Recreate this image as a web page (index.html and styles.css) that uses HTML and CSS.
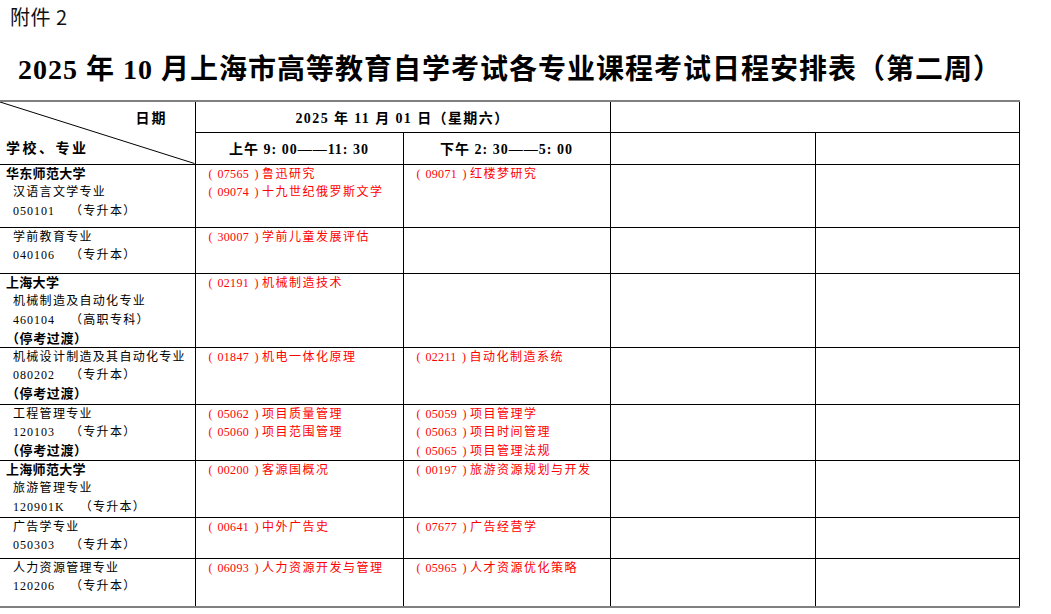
FILE: index.html
```html
<!DOCTYPE html>
<html lang="zh-CN">
<head>
<meta charset="utf-8">
<title>2025年10月上海市高等教育自学考试日程安排表（第二周）</title>
<link rel="stylesheet" href="styles.css">
</head>
<body>
<div class="attach">附件 2</div>
<h1 class="title">2025 年 10 月上海市高等教育自学考试各专业课程考试日程安排表（第二周）</h1>
<table class="sched">
  <colgroup>
    <col class="c1"><col class="c2"><col class="c3"><col class="c4"><col class="c5">
  </colgroup>
  <tr class="h-a">
    <th class="corner" rowspan="2">
      <svg class="diag" viewBox="0 0 100 100" preserveAspectRatio="none"><line x1="0" y1="0" x2="100" y2="100" stroke="#000" stroke-width="1" vector-effect="non-scaling-stroke"/></svg>
      <span class="c-date">日期</span>
      <span class="c-school">学校、专业</span>
    </th>
    <th class="hd date" colspan="2">2025 年 11 月 01 日（星期六）</th>
    <th class="hd" colspan="2"></th>
  </tr>
  <tr class="h-b">
    <th class="hd">上午 9: 00——11: 30</th>
    <th class="hd">下午 2: 30——5: 00</th>
    <th class="hd"></th>
    <th class="hd"></th>
  </tr>
  <tr class="r1">
    <td class="spec"><div class="school">华东师范大学</div><div class="ln">汉语言文学专业</div><div class="ln"><span class="code">050101</span>（专升本）</div></td>
    <td class="crs"><div><span class="cc">(<span class="num">07565</span>)</span>鲁迅研究</div><div><span class="cc">(<span class="num">09074</span>)</span>十九世纪俄罗斯文学</div></td>
    <td class="crs"><div><span class="cc">(<span class="num">09071</span>)</span>红楼梦研究</div></td>
    <td></td><td></td>
  </tr>
  <tr class="r2">
    <td class="spec"><div class="ln">学前教育专业</div><div class="ln"><span class="code">040106</span>（专升本）</div></td>
    <td class="crs"><div><span class="cc">(<span class="num">30007</span>)</span>学前儿童发展评估</div></td>
    <td></td><td></td><td></td>
  </tr>
  <tr class="r3">
    <td class="spec"><div class="school">上海大学</div><div class="ln">机械制造及自动化专业</div><div class="ln"><span class="code">460104</span>（高职专科）</div><div class="stop">（停考过渡）</div></td>
    <td class="crs"><div><span class="cc">(<span class="num">02191</span>)</span>机械制造技术</div></td>
    <td></td><td></td><td></td>
  </tr>
  <tr class="r4">
    <td class="spec"><div class="ln">机械设计制造及其自动化专业</div><div class="ln"><span class="code">080202</span>（专升本）</div><div class="stop">（停考过渡）</div></td>
    <td class="crs"><div><span class="cc">(<span class="num">01847</span>)</span>机电一体化原理</div></td>
    <td class="crs"><div><span class="cc">(<span class="num">02211</span>)</span>自动化制造系统</div></td>
    <td></td><td></td>
  </tr>
  <tr class="r5">
    <td class="spec"><div class="ln">工程管理专业</div><div class="ln"><span class="code">120103</span>（专升本）</div><div class="stop">（停考过渡）</div></td>
    <td class="crs"><div><span class="cc">(<span class="num">05062</span>)</span>项目质量管理</div><div><span class="cc">(<span class="num">05060</span>)</span>项目范围管理</div></td>
    <td class="crs"><div><span class="cc">(<span class="num">05059</span>)</span>项目管理学</div><div><span class="cc">(<span class="num">05063</span>)</span>项目时间管理</div><div><span class="cc">(<span class="num">05065</span>)</span>项目管理法规</div></td>
    <td></td><td></td>
  </tr>
  <tr class="r6">
    <td class="spec"><div class="school">上海师范大学</div><div class="ln">旅游管理专业</div><div class="ln"><span class="code">120901K</span>（专升本）</div></td>
    <td class="crs"><div><span class="cc">(<span class="num">00200</span>)</span>客源国概况</div></td>
    <td class="crs"><div><span class="cc">(<span class="num">00197</span>)</span>旅游资源规划与开发</div></td>
    <td></td><td></td>
  </tr>
  <tr class="r7">
    <td class="spec"><div class="ln">广告学专业</div><div class="ln"><span class="code">050303</span>（专升本）</div></td>
    <td class="crs"><div><span class="cc">(<span class="num">00641</span>)</span>中外广告史</div></td>
    <td class="crs"><div><span class="cc">(<span class="num">07677</span>)</span>广告经营学</div></td>
    <td></td><td></td>
  </tr>
  <tr class="r8">
    <td class="spec"><div class="ln">人力资源管理专业</div><div class="ln"><span class="code">120206</span>（专升本）</div></td>
    <td class="crs"><div><span class="cc">(<span class="num">06093</span>)</span>人力资源开发与管理</div></td>
    <td class="crs"><div><span class="cc">(<span class="num">05965</span>)</span>人才资源优化策略</div></td>
    <td></td><td></td>
  </tr>
</table>
</body>
</html>
```

FILE: styles.css
```css
html, body {
  margin: 0;
  padding: 0;
  background: #fff;
}
body {
  width: 1051px;
  color: #000;
  font-family: "Liberation Serif", "Noto Sans CJK SC", serif;
}
.attach {
  padding: 5px 0 0 10px;
  font-family: "Noto Sans CJK SC", "Liberation Sans", sans-serif;
  font-size: 20px;
  line-height: 24px;
  letter-spacing: 0.5px;
  color: #111;
}
.title {
  margin: 21px 0 10px 0;
  padding-left: 18px;
  font-family: "Liberation Serif", "Noto Sans CJK SC", serif;
  font-weight: bold;
  font-size: 28px;
  line-height: 40px;
  letter-spacing: 1px;
  white-space: nowrap;
}
.sched {
  border-collapse: collapse;
  table-layout: fixed;
  width: 1019px;
  border-top: 2px solid #808080;
  border-bottom: 2px solid #808080;
}
.c1 { width: 195px; }
.c2 { width: 208px; }
.c3 { width: 207px; }
.c4 { width: 205px; }
.c5 { width: 204px; }
.sched th, .sched td {
  border: 1px solid #000;
  padding: 0;
}
.sched tr > :first-child {
  border-left: none;
}
.sched th {
  font-weight: bold;
  font-size: 14px;
  letter-spacing: 1px;
  text-align: center;
  vertical-align: middle;
  white-space: nowrap;
}
.sched th.date {
  letter-spacing: 1.4px;
}
.h-a { height: 31px; }
.h-b { height: 32px; }
.r1 { height: 63px; }
.r2 { height: 46px; }
.r3 { height: 74px; }
.r4 { height: 57px; }
.r5 { height: 56px; }
.r6 { height: 57px; }
.r7 { height: 41px; }
.r8 { height: 49px; }
.corner {
  position: relative;
}
.diag {
  position: absolute;
  left: 0;
  top: 0;
  width: 100%;
  height: 100%;
}
.c-date {
  position: absolute;
  top: 5px;
  right: 27px;
  letter-spacing: 2px;
}
.c-school {
  position: absolute;
  left: 6px;
  bottom: 7px;
  letter-spacing: 2.5px;
}
.sched td {
  vertical-align: top;
  font-size: 12px;
  line-height: 18.7px;
  letter-spacing: 1.3px;
  white-space: nowrap;
}
.sched td > div:last-child {
  margin-bottom: -8px;
}
.sched td.spec {
  padding-left: 6px;
}
.school {
  font-weight: bold;
  font-size: 13px;
  letter-spacing: 0.3px;
}
.ln {
  padding-left: 7px;
}
.code {
  display: inline-block;
  margin-right: 15px;
  letter-spacing: 1px;
}
.stop {
  font-weight: bold;
  font-size: 13px;
  letter-spacing: 0.6px;
}
.sched td.crs {
  padding-left: 13px;
  color: #f00;
  letter-spacing: 1.5px;
}
.cc {
  letter-spacing: 3.5px;
}
.num {
  letter-spacing: 0.3px;
  margin: 0 5.5px 0 1.5px;
}
```
